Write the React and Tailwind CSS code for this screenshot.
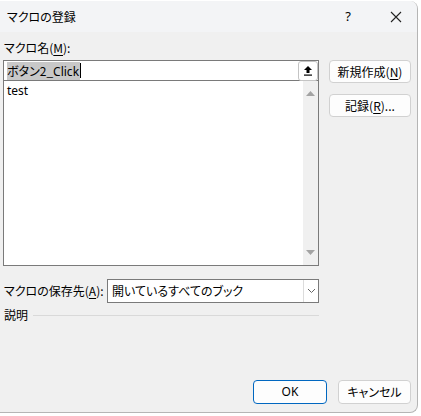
const jp = { fontFamily: '"Noto Sans CJK JP", "Noto Sans", sans-serif' };
const latin = { fontFamily: '"Noto Sans", sans-serif' };

const UploadIcon = () => (
  <svg width="10" height="11" viewBox="0 0 10 11">
    <path d="M5 1 L9 5 L6.5 5 L6.5 8 L3.5 8 L3.5 5 L1 5 Z" fill="#000" />
    <rect x="1" y="9.5" width="8" height="1.2" fill="#000" />
  </svg>
);

const CloseIcon = () => (
  <svg width="12" height="12" viewBox="0 0 12 12">
    <path d="M1 1 L11 11 M11 1 L1 11" stroke="#222" strokeWidth="1.1" />
  </svg>
);

const Chevron = () => (
  <svg width="9" height="6" viewBox="0 0 9 6">
    <path d="M1 1 L4.5 4.5 L8 1" stroke="#666" strokeWidth="1" fill="none" />
  </svg>
);

const Key = ({ children }) => <span className="underline underline-offset-2">{children}</span>;

const SideButton = ({ children }) => (
  <button className="w-[82px] h-[23px] rounded-[4px] border border-[#d1d1d1] bg-[#fdfdfd] text-[12px] text-black flex items-center justify-center">
    {children}
  </button>
);

export default function App() {
  return (
    <div className="w-[421px] h-[416px] bg-white overflow-hidden text-black [font-feature-settings:'palt']" style={jp}>
      <div className="mt-px w-[418px] h-[412px] bg-[#f0f0f0] border-r border-b border-[#b5b5b5] rounded-tr-[8px] rounded-br-[8px] flex flex-col overflow-hidden">
        {/* title bar */}
        <div className="h-[31px] shrink-0 bg-[#f3f4f6] flex items-center pl-[7px] text-[12px]">
          <span>マクロの登録</span>
          <span className="ml-auto mr-[39px] text-[13px]" style={latin}>?</span>
          <span className="mr-[15px] flex"><CloseIcon /></span>
        </div>

        <div className="pl-[3px] flex">
          <div className="w-[316px]">
            <div className="h-[28px] pt-[7px] pl-px text-[12px] leading-[18px]">
              マクロ名(<Key>M</Key>):
            </div>
            <div className="h-[21px] border border-[#7a7a7a] bg-white flex items-center pl-[3px]">
              <span className="bg-[#c8c8c8] text-[12px] leading-[17px] pr-px">
                ボタン2_<span style={latin}>Click</span>
              </span>
              <span className="w-px h-[15px] bg-black" />
              <span className="ml-auto w-[20px] h-[20px] border border-[#c4c4c4] rounded-[3px] bg-white flex items-center justify-center">
                <UploadIcon />
              </span>
            </div>
            <div className="h-[185px] border border-t-0 border-[#7a7a7a] bg-white flex">
              <div className="flex-1 pl-[3px] pt-px text-[12px] leading-[18px]" style={latin}>
                test
              </div>
              <div className="w-[15px] bg-[#f0f0f0] flex flex-col items-center justify-between py-[10px]">
                <svg width="9" height="5" viewBox="0 0 9 5"><path d="M0 5 L4.5 0 L9 5 Z" fill="#a3a3a3" /></svg>
                <svg width="9" height="5" viewBox="0 0 9 5"><path d="M0 0 L4.5 5 L9 0 Z" fill="#a3a3a3" /></svg>
              </div>
            </div>

            <div className="mt-[13px] flex items-center">
              <span className="w-[104px] pl-px text-[12px]">マクロの保存先(<Key>A</Key>):</span>
              <div className="w-[212px] h-[24px] border border-[#7a7a7a] bg-white flex items-center">
                <span className="flex-1 pl-[4px] text-[12px]">開いているすべてのブック</span>
                <span className="w-[15px] h-full border-l border-[#dcdcdc] flex items-center justify-center">
                  <Chevron />
                </span>
              </div>
            </div>

            <div className="mt-[3px] flex items-center">
              <span className="pl-px text-[12px]">説明</span>
              <span className="ml-[5px] flex-1 h-px bg-[#d9d9d9]" />
            </div>
          </div>

          <div className="ml-[10px] pt-[28px] flex flex-col gap-[11px]">
            <SideButton>新規作成(<Key>N</Key>)</SideButton>
            <SideButton>記録(<Key>R</Key>)...</SideButton>
          </div>
        </div>

        <div className="mt-auto pb-[8px] pr-[6px] flex justify-end gap-[11px]">
          <button className="w-[74px] h-[24px] rounded-[4px] border border-[#0067c0] bg-[#fdfdfd] text-[12px] flex items-center justify-center" style={latin}>
            OK
          </button>
          <button className="w-[73px] h-[24px] rounded-[4px] border border-[#d1d1d1] bg-[#fdfdfd] text-[12px] flex items-center justify-center">
            キャンセル
          </button>
        </div>
      </div>
    </div>
  );
}
